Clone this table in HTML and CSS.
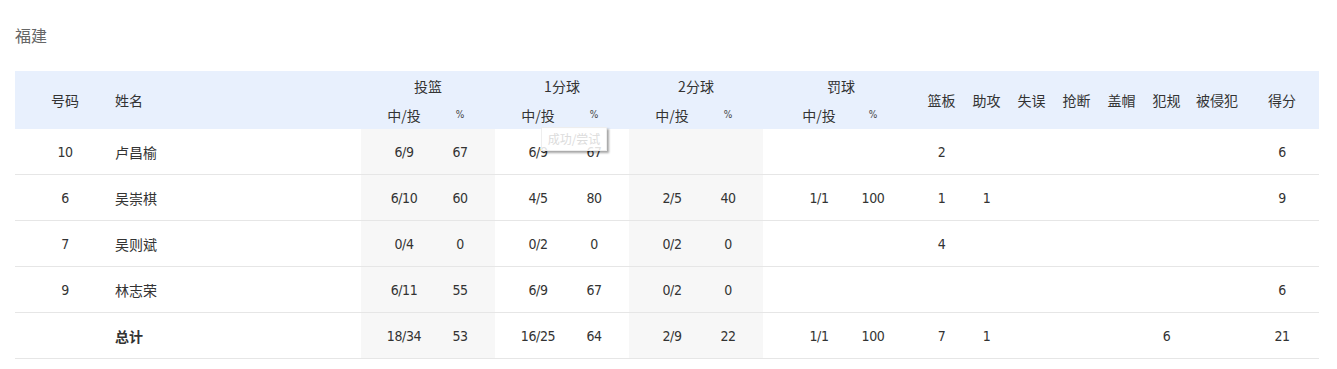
FILE: index.html
```html
<!DOCTYPE html>
<html lang="zh">
<head>
<meta charset="utf-8">
<title>福建</title>
<link rel="stylesheet" href="styles.css">
</head>
<body>
<div class="page">
  <div class="team">福建</div>
  <div class="wrap">
  <table class="stats">
    <colgroup>
      <col class="c-no"><col class="c-name">
      <col class="c-a"><col class="c-b">
      <col class="c-a"><col class="c-b">
      <col class="c-a"><col class="c-b">
      <col class="c-fa"><col class="c-fb">
      <col class="c-s"><col class="c-s"><col class="c-s"><col class="c-s"><col class="c-s"><col class="c-s">
      <col class="c-foul"><col class="c-pts">
    </colgroup>
    <thead>
      <tr>
        <th rowspan="2">号码</th>
        <th rowspan="2" class="left">姓名</th>
        <th colspan="2">投篮</th>
        <th colspan="2">1分球</th>
        <th colspan="2">2分球</th>
        <th colspan="2" class="ft-group">罚球</th>
        <th rowspan="2">篮板</th>
        <th rowspan="2">助攻</th>
        <th rowspan="2">失误</th>
        <th rowspan="2">抢断</th>
        <th rowspan="2">盖帽</th>
        <th rowspan="2">犯规</th>
        <th rowspan="2">被侵犯</th>
        <th rowspan="2">得分</th>
      </tr>
      <tr class="sub">
        <th>中/投</th><th class="pct">%</th>
        <th>中/投</th><th class="pct">%</th>
        <th>中/投</th><th class="pct">%</th>
        <th class="fa">中/投</th><th class="fb pct">%</th>
      </tr>
    </thead>
    <tbody>
      <tr>
        <td class="num">10</td><td class="name">卢昌榆</td>
        <td class="num g">6/9</td><td class="num g p">67</td>
        <td class="num">6/9</td><td class="num p">67</td>
        <td class="num g"></td><td class="num g p"></td>
        <td class="num fa"></td><td class="num fb"></td>
        <td class="num">2</td><td class="num"></td><td class="num"></td><td class="num"></td><td class="num"></td><td class="num"></td><td class="num"></td>
        <td class="num">6</td>
      </tr>
      <tr>
        <td class="num">6</td><td class="name">吴崇棋</td>
        <td class="num g">6/10</td><td class="num g p">60</td>
        <td class="num">4/5</td><td class="num p">80</td>
        <td class="num g">2/5</td><td class="num g p">40</td>
        <td class="num fa">1/1</td><td class="num fb">100</td>
        <td class="num">1</td><td class="num">1</td><td class="num"></td><td class="num"></td><td class="num"></td><td class="num"></td><td class="num"></td>
        <td class="num">9</td>
      </tr>
      <tr>
        <td class="num">7</td><td class="name">吴则斌</td>
        <td class="num g">0/4</td><td class="num g p">0</td>
        <td class="num">0/2</td><td class="num p">0</td>
        <td class="num g">0/2</td><td class="num g p">0</td>
        <td class="num fa"></td><td class="num fb"></td>
        <td class="num">4</td><td class="num"></td><td class="num"></td><td class="num"></td><td class="num"></td><td class="num"></td><td class="num"></td>
        <td class="num"></td>
      </tr>
      <tr>
        <td class="num">9</td><td class="name">林志荣</td>
        <td class="num g">6/11</td><td class="num g p">55</td>
        <td class="num">6/9</td><td class="num p">67</td>
        <td class="num g">0/2</td><td class="num g p">0</td>
        <td class="num fa"></td><td class="num fb"></td>
        <td class="num"></td><td class="num"></td><td class="num"></td><td class="num"></td><td class="num"></td><td class="num"></td><td class="num"></td>
        <td class="num">6</td>
      </tr>
      <tr class="total">
        <td class="num"></td><td class="name">总计</td>
        <td class="num g">18/34</td><td class="num g p">53</td>
        <td class="num">16/25</td><td class="num p">64</td>
        <td class="num g">2/9</td><td class="num g p">22</td>
        <td class="num fa">1/1</td><td class="num fb">100</td>
        <td class="num">7</td><td class="num">1</td><td class="num"></td><td class="num"></td><td class="num"></td><td class="num">6</td><td class="num"></td>
        <td class="num">21</td>
      </tr>
    </tbody>
  </table>
  <div class="tip">成功/尝试</div>
  </div>
</div>
</body>
</html>
```
FILE: styles.css
```css
html, body {
  margin: 0;
  padding: 0;
  background: #fff;
}
body {
  font-family: "Noto Sans CJK SC", "Microsoft YaHei", sans-serif;
  color: #333;
}
.page {
  padding: 0 18px 0 15px;
}
.team {
  font-size: 16px;
  line-height: 22px;
  color: #666;
  padding-top: 24px;
  height: 71px;
  box-sizing: border-box;
}
.wrap {
  position: relative;
}
.stats {
  width: 1304px;
  border-collapse: collapse;
  table-layout: fixed;
}
.c-no { width: 100px; }
.c-name { width: 246px; }
.c-a { width: 86px; }
.c-b { width: 48px; }
.c-fa { width: 92px; }
.c-fb { width: 64px; }
.c-s { width: 45px; }
.c-foul { width: 56px; }
.c-pts { width: 74px; }

thead th {
  background: #e8f0fd;
  font-weight: normal;
  font-size: 14px;
  height: 29px;
  padding: 0;
  text-align: center;
  white-space: nowrap;
  line-height: 20px;
  color: #333;
}
thead th.left { text-align: left; }
thead th.pct {
  font-family: "DejaVu Sans Condensed", "Liberation Sans Narrow", "Liberation Sans", sans-serif;
  font-stretch: condensed;
  font-size: 10px;
  color: #444;
  padding-right: 22px;
}
thead th.fa { padding-left: 20px; }
thead th.fb { padding-right: 28px; }

tbody td {
  height: 45px;
  padding: 0;
  border-bottom: 1px solid #e6e6e6;
  text-align: center;
  font-size: 14px;
}
td.num {
  font-family: "DejaVu Sans Condensed", "Liberation Sans Narrow", "Liberation Sans", sans-serif;
  font-stretch: condensed;
  font-size: 14px;
  letter-spacing: -0.4px;
  color: #333;
}
td.p { padding-right: 22px; }
td.fa { padding-left: 20px; }
td.fb { padding-right: 28px; }
td.g { background: #f7f7f7; }
td.name {
  text-align: left;
  font-family: "Noto Sans CJK SC", sans-serif;
  font-size: 14px;
  color: #333;
}
tr.total td.name { font-weight: bold; }

.tip {
  position: absolute;
  left: 526px;
  top: 56px;
  width: 66px;
  height: 24px;
  box-sizing: border-box;
  background: rgba(255,255,255,0.85);
  border: 1px solid #eee;
  box-shadow: 2px 2px 2px rgba(0,0,0,0.35);
  font-size: 12px;
  line-height: 22px;
  color: #dcdcdc;
  text-align: center;
  white-space: nowrap;
}
```
